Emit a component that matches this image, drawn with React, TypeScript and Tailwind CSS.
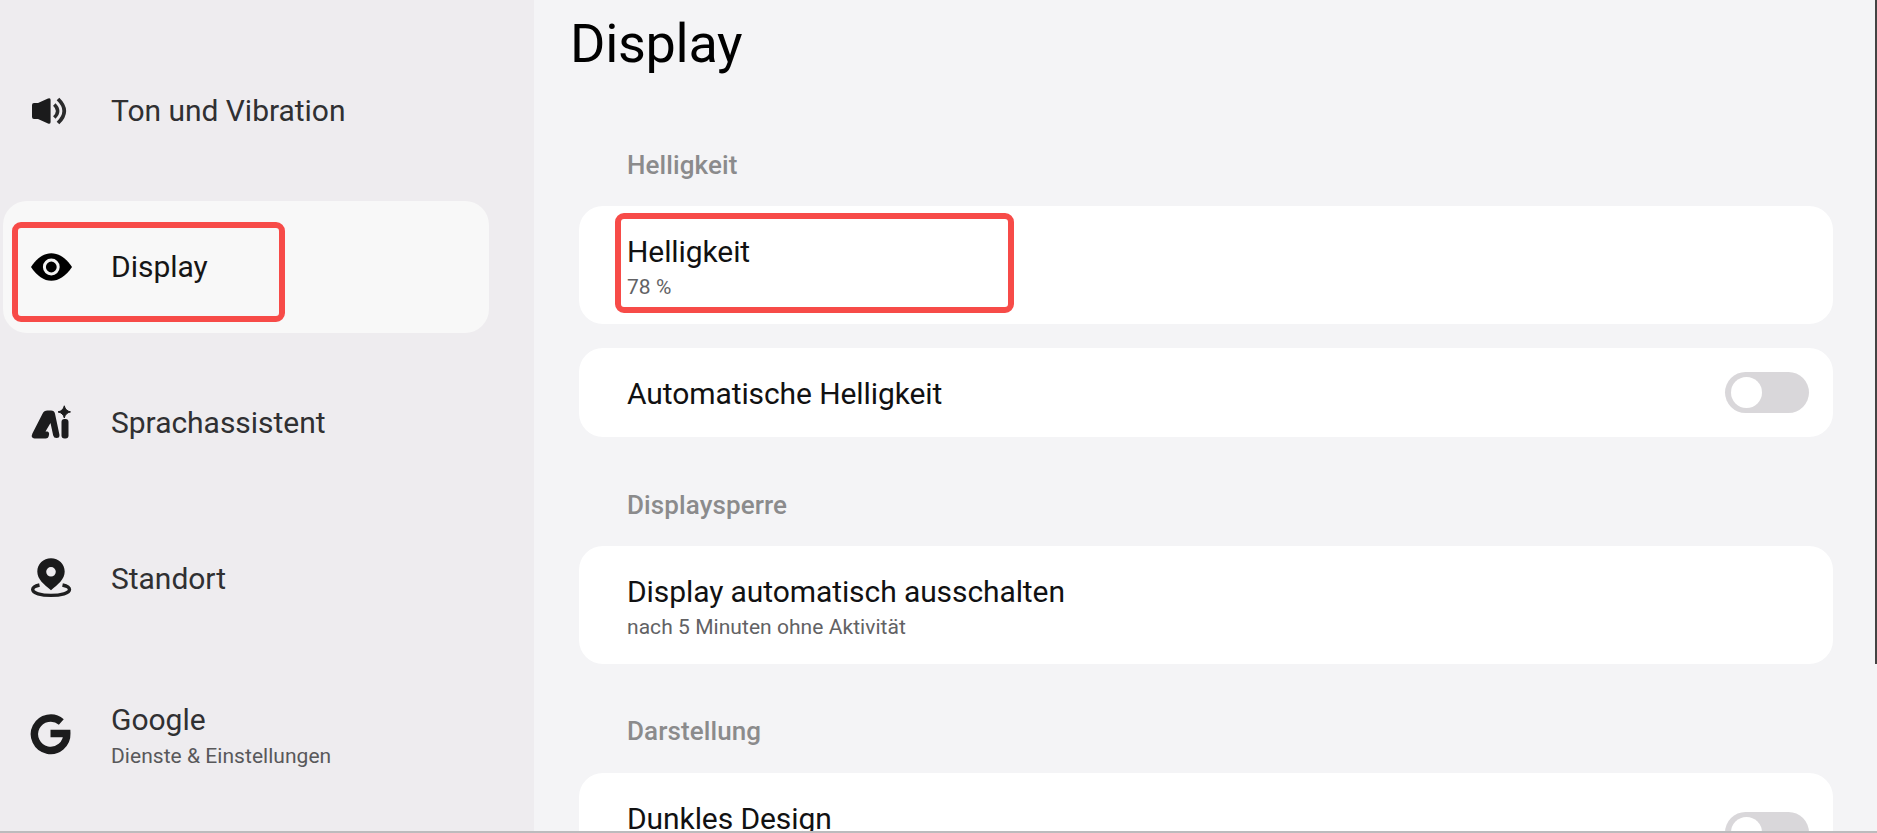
import type { ReactNode } from "react";

function SoundIcon() {
  return (
    <svg viewBox="0 0 64 50" className="h-[50px] w-16" fill="none">
      <path d="M12 19Q12 17 14 17H18L28 12.6Q30.600 11.500 30.600 14V36Q30.600 38.500 28 37.400L18 33H14Q12 33 12 31Z" fill="#1b1b1c" />
      <path d="M34.300 18.500Q41 25 34.300 31.500" stroke="#2b2b2c" strokeWidth="3.500" />
      <path d="M38 13Q50.500 25 38 37" stroke="#2b2b2c" strokeWidth="3.800" />
    </svg>
  );
}

function EyeIcon() {
  return (
    <svg viewBox="0 0 64 50" className="h-[50px] w-16">
      <path d="M11 25C17 16 24 11.200 31.300 11.200S46 16 52 25C46 34 38.600 38.800 31.300 38.800S17 34 11 25Z" fill="#000" />
      <circle cx="31.300" cy="25" r="6.900" fill="#000" stroke="#f3f3f3" strokeWidth="3" />
    </svg>
  );
}

function AssistantIcon() {
  return (
    <svg viewBox="0 0.5 64 50" className="h-[50px] w-16">
      <path
        fillRule="evenodd"
        d="M12.400 36L22.500 16.200Q24 13 27.500 13H31Q34.300 13 35 16.200L39.400 37Q40 40.500 36.500 40.500Q33.800 40.500 33.200 38L30.500 25.500L25.500 34H27.500Q29.500 34.500 29 37.500Q28.500 41 25.500 41H14.500Q10.500 40.500 12.400 36Z"
        fill="#1c1c1d"
      />
      <rect x="41.500" y="21.500" width="7" height="19.500" rx="3" fill="#1c1c1d" />
      <path d="M44.300 8.300Q45.300 13.300 50.500 14.400Q45.300 15.500 44.300 20.500Q43.300 15.500 38 14.400Q43.300 13.300 44.300 8.300Z" fill="#1c1c1d" stroke="#1c1c1d" strokeWidth="1" />
    </svg>
  );
}

function LocationIcon() {
  return (
    <svg viewBox="0 -0.5 64 60" className="h-[60px] w-16" fill="none">
      <path
        fillRule="evenodd"
        d="M31 8.800C38.600 8.800 44.700 14.600 44.700 22.100C44.700 30 38 35 31 40.800C24 35 17.300 30 17.300 22.100C17.300 14.600 23.400 8.800 31 8.800ZM31 17.500A4.800 4.800 0 1 0 31 27.100A4.800 4.800 0 1 0 31 17.500Z"
        fill="#1a1a1b"
      />
      <path d="M19.500 35.500C15 36.500 12.700 38.200 12.700 40C12.700 43.500 21 45.900 31 45.900S49.500 43.500 49.500 40C49.500 38.200 47 36.500 42.500 35.500" stroke="#1f1f20" strokeWidth="3.400" />
    </svg>
  );
}

function GoogleIcon() {
  return (
    <svg viewBox="0 0 64 50" className="h-[50px] w-16" fill="none">
      <path d="M41.300 12A16.200 16.200 0 1 0 46.800 23.500H30.500" stroke="#1c1c1d" strokeWidth="7.400" />
    </svg>
  );
}

type NavItemProps = { icon: ReactNode; label: string; detail?: string; active?: boolean };

function NavItem({ icon, label, detail, active = false }: NavItemProps) {
  return (
    <li className={`flex h-[132px] items-center rounded-[24px] pl-[17px] ${active ? "bg-[#f8f8f8] text-[#161616]" : "text-[#303032]"}`}>
      {icon}
      <div className={`pl-[27px] whitespace-nowrap ${detail ? "pt-[2px]" : ""}`}>
        <div className="text-[30px] leading-[36px] tracking-[-0.03px]">{label}</div>
        {detail && <div className="pt-1 text-[21px] leading-7 tracking-[0.04px] text-[#58585a]">{detail}</div>}
      </div>
    </li>
  );
}

function Toggle() {
  return (
    <span role="switch" aria-checked="false" className="flex h-[41px] w-21 items-center rounded-full bg-[#d9d7da] pl-[6px]">
      <span className="size-[31px] rounded-full bg-white" />
    </span>
  );
}

function SectionTitle({ children }: { children: ReactNode }) {
  return <h2 className="pl-12 text-[26px] leading-8 font-medium tracking-[0.1px] text-[#8b8b8c]">{children}</h2>;
}

type SettingProps = { title: string; detail?: string; toggle?: boolean; tall?: boolean };

function Setting({ title, detail, toggle = false, tall = false }: SettingProps) {
  const twoLine = tall || detail !== undefined;
  return (
    <div className={`flex items-center justify-between rounded-[24px] bg-white pr-6 pl-12 text-[#111112] ${twoLine ? "h-[118px]" : "h-[89px]"}`}>
      <div className={`whitespace-nowrap ${twoLine ? "pt-[6px]" : "pt-[2px]"}`}>
        <div className="text-[30px] leading-9 tracking-[-0.09px]">{title}</div>
        {twoLine && <div className="h-8 pt-[3px] text-[21px] leading-7 tracking-[0.05px] text-[#626264]">{detail}</div>}
      </div>
      {toggle && <Toggle />}
    </div>
  );
}

export default function App() {
  return (
    <div className="relative flex h-[833px] w-[1877px] overflow-hidden bg-[#f4f4f6] font-[Roboto,sans-serif]">
      <nav className="w-[534px] shrink-0 bg-[#eeecef] pt-[45px] pr-[45px] pl-[3px]">
        <ul className="flex flex-col gap-6">
          <NavItem icon={<SoundIcon />} label="Ton und Vibration" />
          <NavItem icon={<EyeIcon />} label="Display" active />
          <NavItem icon={<AssistantIcon />} label="Sprachassistent" />
          <NavItem icon={<LocationIcon />} label="Standort" />
          <NavItem icon={<GoogleIcon />} label="Google" detail="Dienste & Einstellungen" />
        </ul>
      </nav>
      <main className="flex-1 pt-[12px] pr-11 pl-[45px]">
        <h1 className="-ml-[9px] text-[54px] leading-16 tracking-[-0.3px] text-black">Display</h1>
        <section className="flex flex-col pt-[73px]">
          <SectionTitle>Helligkeit</SectionTitle>
          <div className="flex flex-col gap-[24px] pt-[25px]">
            <Setting title="Helligkeit" detail="78 %" />
            <Setting title="Automatische Helligkeit" toggle />
          </div>
        </section>
        <section className="pt-[52px]">
          <SectionTitle>Displaysperre</SectionTitle>
          <div className="pt-[25px]">
            <Setting title="Display automatisch ausschalten" detail="nach 5 Minuten ohne Aktivität" />
          </div>
        </section>
        <section className="pt-[51px]">
          <SectionTitle>Darstellung</SectionTitle>
          <div className="pt-[26px]">
            <Setting title="Dunkles Design" toggle tall />
          </div>
        </section>
      </main>
      <div className="absolute top-[222px] left-[12px] h-[100px] w-[273px] rounded-[9px] border-6 border-[#f74b48]" />
      <div className="absolute top-[213px] left-[615px] h-[100px] w-[399px] rounded-[9px] border-6 border-[#f74b48]" />
      <div className="absolute top-0 right-0 h-[664px] w-[2px] bg-[#444444]" />
      <div className="absolute bottom-0 left-0 h-[2px] w-full bg-[#bcbbbd]" />
    </div>
  );
}
